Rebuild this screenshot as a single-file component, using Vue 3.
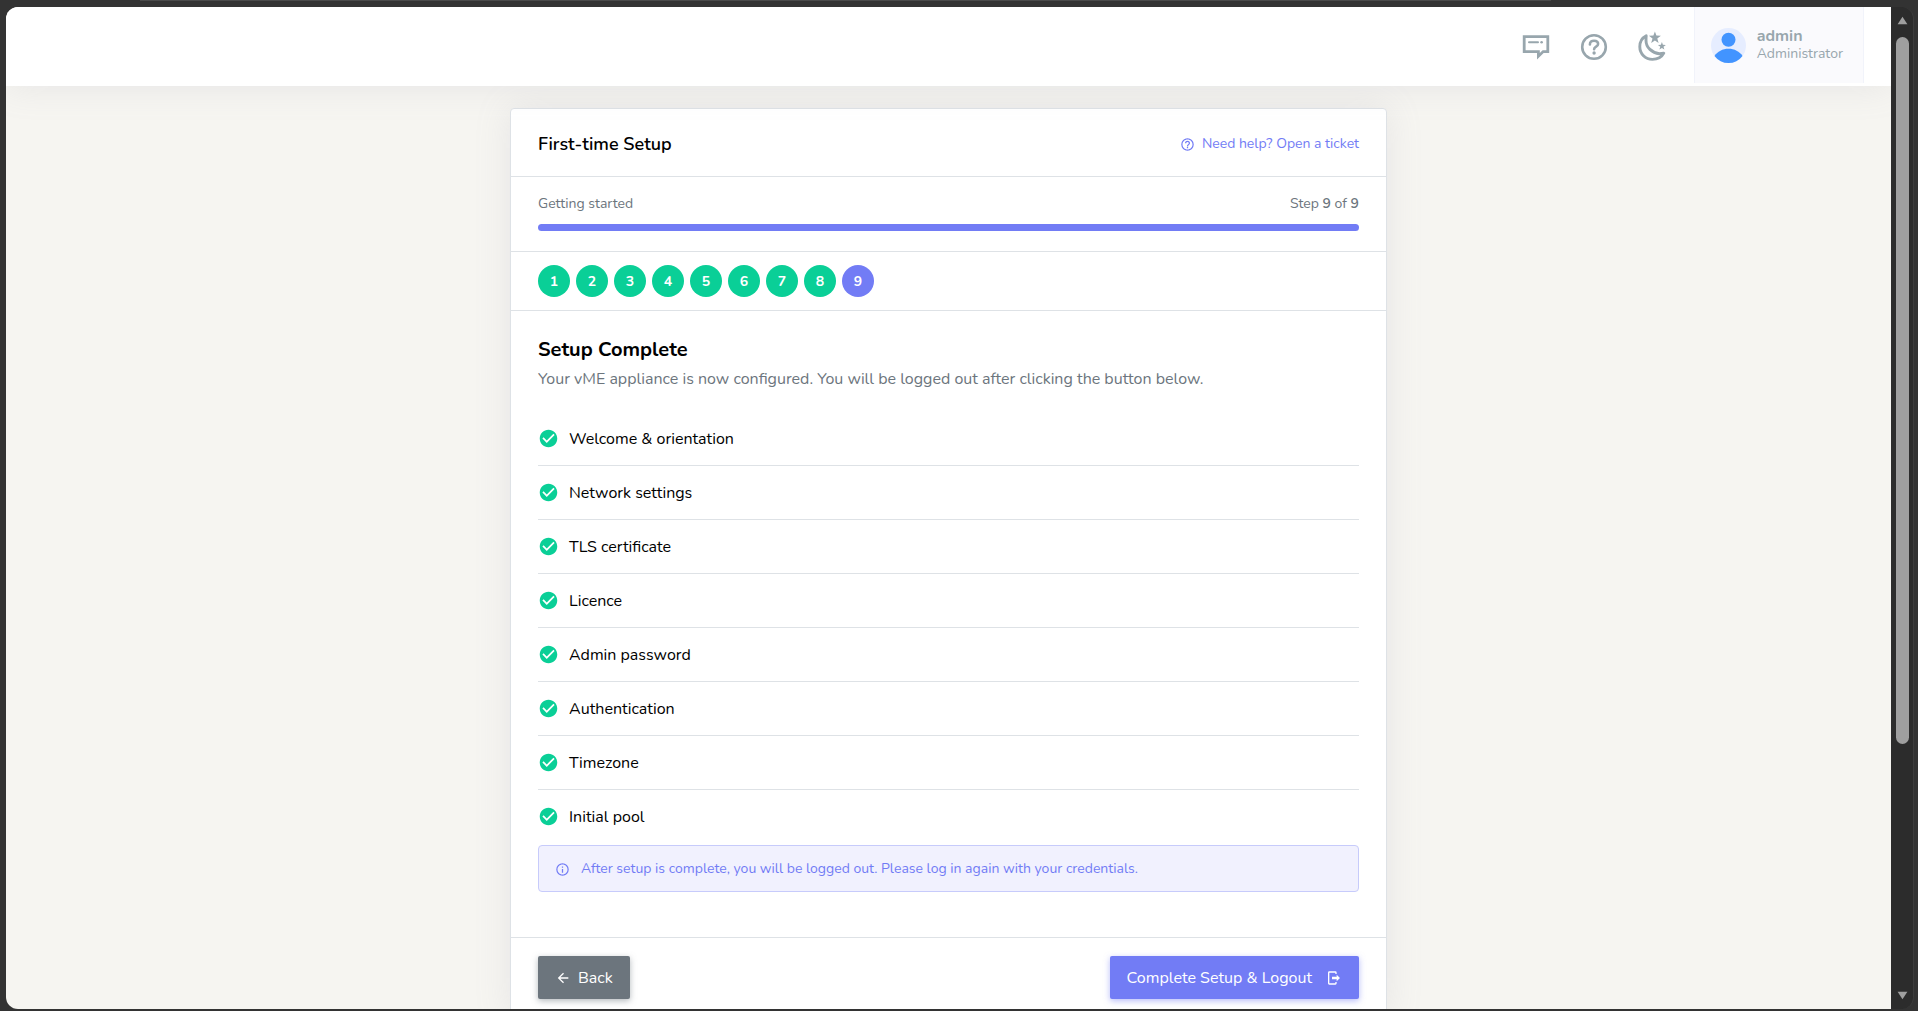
<template>
  <div class="window">
    <div class="tab-edge"></div>
    <div class="viewport">
      <div class="page">
        <header class="topbar">
          <button type="button" class="topbar-btn" aria-label="Feedback">
            <svg width="28" height="28" viewBox="0 0 28 28" fill="none" stroke="currentColor" stroke-width="2.8">
              <path d="M2.2 3.6H25.8V18.6H21.2L16.4 23.2V18.6H2.2Z" />
              <path d="M7 9.2H16" stroke-linecap="round" stroke-width="2" />
              <circle cx="19.6" cy="9.2" r="1.3" fill="currentColor" stroke="none" />
            </svg>
          </button>
          <button type="button" class="topbar-btn" aria-label="Help">
            <svg width="28" height="28" viewBox="0 0 28 28" fill="none" stroke="currentColor" stroke-width="2.6">
              <circle cx="14" cy="14" r="11.8" />
              <path d="M9.9 11.4C9.9 8.9 11.7 7.7 14 7.7S18.1 9 18.1 11C18.1 13.8 14.1 13.4 14.1 16.2" stroke-linecap="round" />
              <circle cx="14.1" cy="20" r="1.7" fill="currentColor" stroke="none" />
            </svg>
          </button>
          <button type="button" class="topbar-btn" aria-label="Dark mode">
            <svg width="28" height="32" viewBox="0 0 28 32" fill="currentColor">
              <path
                d="M8.2 4.8C3.9 7 1.8 11.2 1.8 15.8C1.8 22.8 7.4 28.4 14.4 28.4C19.4 28.4 23.7 26.2 25.8 22.2C24.3 22.6 22.8 22.7 21.4 22.7C14 22 8 16.4 8 9.4C8 7.8 8 6.3 8.2 4.8Z"
                fill="none" stroke="currentColor" stroke-width="2.9" stroke-linejoin="round"
              />
              <path d="M16.9 0.4L18.4 4.6L22.9 4.7L19.3 7.5L20.6 12L16.9 9.4L13.2 12L14.5 7.5L10.9 4.7L15.4 4.6Z" />
              <path d="M23.9 11L24.9 13.8L27.9 13.9L25.5 15.7L26.4 18.6L23.9 16.9L21.4 18.6L22.3 15.7L19.9 13.9L22.9 13.8Z" />
            </svg>
          </button>
          <button type="button" class="user">
            <svg class="avatar" width="35" height="35" viewBox="0 0 35 35">
              <circle cx="17.5" cy="17.5" r="17.5" fill="#e6edff" />
              <circle cx="17.5" cy="11.8" r="7" fill="#4294ff" />
              <path d="M3.5 28C6.5 23.4 11.6 20.8 17.5 20.8S28.5 23.4 31.5 28A17.5 17.5 0 0 1 3.5 28Z" fill="#4294ff" />
            </svg>
            <span class="user-text">
              <strong>admin</strong>
              <span>Administrator</span>
            </span>
          </button>
        </header>

        <main class="content">
          <section class="card">
            <div class="card-head">
              <h1>First-time Setup</h1>
              <a href="#" class="help-link">
                <svg class="icon-sm" viewBox="0 0 24 24"><path :d="icons.help" /></svg>
                Need help? Open a ticket
              </a>
            </div>

            <div class="progress-section">
              <div class="progress-labels">
                <span>Getting started</span>
                <span>Step <b>{{ current }}</b> of <b>{{ total }}</b></span>
              </div>
              <div class="progress">
                <div class="progress-bar" :style="{ width: (current / total) * 100 + '%' }"></div>
              </div>
            </div>

            <div class="steps">
              <button
                v-for="n in total"
                :key="n"
                type="button"
                class="step"
                :class="{ active: n === current }"
              >
                {{ n }}
              </button>
            </div>

            <div class="card-body">
              <h2>Setup Complete</h2>
              <p class="lead">
                Your vME appliance is now configured. You will be logged out after clicking the button below.
              </p>
              <ul class="checklist">
                <li v-for="item in items" :key="item">
                  <svg class="icon-check" viewBox="0 0 24 24"><path :d="icons.check" /></svg>
                  {{ item }}
                </li>
              </ul>
              <div class="alert">
                <svg class="icon-sm" viewBox="0 0 24 24"><path :d="icons.info" /></svg>
                After setup is complete, you will be logged out. Please log in again with your credentials.
              </div>
            </div>

            <div class="card-foot">
              <button type="button" class="btn btn-secondary">
                <svg class="icon-btn" viewBox="0 0 24 24"><path :d="icons.back" /></svg>
                Back
              </button>
              <button type="button" class="btn btn-primary">
                Complete Setup &amp; Logout
                <svg class="icon-btn" viewBox="0 0 24 24"><path :d="icons.logout" /></svg>
              </button>
            </div>
          </section>
        </main>
      </div>

      <div class="scrollbar">
        <svg width="11" height="9" viewBox="0 0 11 9"><path d="M5.5 0.8L10.4 8.2H0.6Z" /></svg>
        <div class="track"><div class="thumb"></div></div>
        <svg width="11" height="9" viewBox="0 0 11 9"><path d="M5.5 8.2L10.4 0.8H0.6Z" /></svg>
      </div>
    </div>
  </div>
</template>

<script setup>
import { ref } from "vue";

const total = 9;
const current = ref(9);

const items = [
  "Welcome & orientation",
  "Network settings",
  "TLS certificate",
  "Licence",
  "Admin password",
  "Authentication",
  "Timezone",
  "Initial pool",
];

const icons = {
  help: "M11,18H13V16H11V18M12,2A10,10 0 0,0 2,12A10,10 0 0,0 12,22A10,10 0 0,0 22,12A10,10 0 0,0 12,2M12,20C7.59,20 4,16.41 4,12C4,7.59 7.59,4 12,4C16.41,4 20,7.59 20,12C20,16.41 16.41,20 12,20M12,6A4,4 0 0,0 8,10H10A2,2 0 0,1 12,8A2,2 0 0,1 14,10C14,12 11,11.75 11,15H13C13,12.75 16,12.5 16,10A4,4 0 0,0 12,6Z",
  info: "M11,9H13V7H11M12,20C7.59,20 4,16.41 4,12C4,7.59 7.59,4 12,4C16.41,4 20,7.59 20,12C20,16.41 16.41,20 12,20M12,2A10,10 0 0,0 2,12A10,10 0 0,0 12,22A10,10 0 0,0 22,12A10,10 0 0,0 12,2M11,17H13V11H11V17Z",
  check: "M12 2C6.5 2 2 6.5 2 12S6.5 22 12 22 22 17.5 22 12 17.5 2 12 2M10 17L5 12L6.41 10.59L10 14.17L17.59 6.58L19 8L10 17Z",
  back: "M20,11V13H8L13.5,18.5L12.08,19.92L4.16,12L12.08,4.08L13.5,5.5L8,11H20Z",
  logout: "M16,17V14H9V10H16V7L21,12L16,17M14,2A2,2 0 0,1 16,4V6H14V4H5V20H14V18H16V20A2,2 0 0,1 14,22H5A2,2 0 0,1 3,20V4A2,2 0 0,1 5,2H14Z",
};
</script>

<style>
body {
  background: #333;
}
</style>

<style scoped>
.window {
  box-sizing: border-box;
  height: 100vh;
  padding: 0 4px 2px 6px;
  display: flex;
  flex-direction: column;
  background: #333;
  font-family: Nunito, "Open Sans", sans-serif;
  font-size: 16px;
  line-height: 24px;
  color: #000;
}
.tab-edge {
  height: 1px;
  margin: 0 19% 6px 7%;
  background: #4a4a4a;
}
.viewport {
  flex: 1;
  min-height: 0;
  display: flex;
  border-right: 1px solid #3d3d3d;
  border-radius: 12px;
  overflow: hidden;
  background: #2c2c2c;
}
.page {
  flex: 1;
  overflow: hidden;
  background: #f6f5f1;
}
.topbar {
  position: relative;
  z-index: 1;
  box-sizing: border-box;
  height: 79px;
  padding-right: 27px;
  display: flex;
  align-items: flex-start;
  justify-content: flex-end;
  background: #fff;
  box-shadow: 0 0 35px rgba(154, 154, 171, 0.17);
}
button {
  font-family: inherit;
  cursor: pointer;
}
.topbar-btn {
  width: 58px;
  height: 79px;
  padding: 0;
  border: 0;
  display: flex;
  align-items: center;
  justify-content: center;
  background: none;
  color: #98a6ad;
}
.user {
  height: 76px;
  margin-left: 13px;
  padding: 0 20px 0 16px;
  display: flex;
  align-items: center;
  gap: 11px;
  border: 1px solid #f1f3fa;
  border-width: 0 1px;
  background: #fafafd;
  color: #98a6ad;
  text-align: left;
}
.user-text {
  display: flex;
  flex-direction: column;
  font-size: 14px;
  line-height: 18px;
}
.user-text strong {
  font-size: 16px;
}
.content {
  padding: 22px 24px;
}
.card {
  box-sizing: border-box;
  max-width: 877px;
  margin: 0 auto;
  border: 1px solid #dee2e6;
  border-radius: 4px;
  background: #fff;
  box-shadow: 0 0 35px rgba(154, 154, 171, 0.17);
}
.card-head {
  padding: 23px 27px 20px;
  display: flex;
  align-items: center;
  justify-content: space-between;
  border-bottom: 1px solid #dee2e6;
}
h1,
h2 {
  margin: 0;
  font-weight: 700;
}
h1 {
  font-size: 18px;
  font-weight: 600;
}
h2 {
  font-size: 20px;
  line-height: 26px;
}
svg {
  flex: none;
}
.icon-sm,
.icon-btn,
.icon-check {
  width: 15px;
  height: 15px;
  fill: currentColor;
}
.help-link {
  display: flex;
  align-items: center;
  gap: 7px;
  font-size: 14px;
  color: #727cf5;
  text-decoration: none;
}
.progress-section {
  padding: 15px 27px 20px;
  border-bottom: 1px solid #dee2e6;
}
.progress-labels {
  display: flex;
  justify-content: space-between;
  font-size: 14px;
  color: #6c757d;
}
.progress-labels b {
  font-weight: 600;
}
.progress {
  height: 7px;
  margin-top: 8px;
  border-radius: 4px;
  overflow: hidden;
  background: #e3eaef;
}
.progress-bar {
  height: 100%;
  background: #727cf5;
}
.steps {
  padding: 13px 27px;
  display: flex;
  gap: 6px;
  border-bottom: 1px solid #dee2e6;
}
.step {
  width: 32px;
  height: 32px;
  padding: 0;
  border: 0;
  border-radius: 50%;
  background: #0acf97;
  color: #fff;
  font-size: 14px;
  font-weight: 700;
}
.step.active {
  background: #727cf5;
}
.card-body {
  padding: 26px 27px 45px;
}
.lead {
  margin: 4px 0 21px;
  color: #6c757d;
}
.checklist {
  margin: 0;
  padding: 0 0 1px;
  list-style: none;
}
.checklist li {
  box-sizing: border-box;
  height: 54px;
  display: flex;
  align-items: center;
  gap: 10px;
  border-bottom: 1px solid #dee2e6;
}
.checklist li:last-child {
  border-bottom-color: transparent;
}
.icon-check {
  width: 21px;
  height: 21px;
  color: #0acf97;
}
.alert {
  padding: 11px 16px 10px;
  display: flex;
  align-items: center;
  gap: 11px;
  border: 1px solid #c7cbfb;
  border-radius: 4px;
  background: #f1f1fe;
  color: #727cf5;
  font-size: 14px;
}
.card-foot {
  padding: 18px 27px;
  display: flex;
  justify-content: space-between;
  border-top: 1px solid #dee2e6;
}
.btn {
  height: 43px;
  padding: 0 17px;
  display: flex;
  align-items: center;
  gap: 7px;
  border: 0;
  border-radius: 2px;
  color: #fff;
  font-size: 16px;
}
.icon-btn {
  width: 16px;
  height: 16px;
}
.btn-secondary {
  background: #6c757d;
  box-shadow: 0 2px 6px rgba(108, 117, 125, 0.5);
}
.btn-primary {
  gap: 14px;
  background: #727cf5;
  box-shadow: 0 2px 6px rgba(114, 124, 245, 0.5);
}
.scrollbar {
  width: 22px;
  padding: 9px 0;
  box-sizing: border-box;
  display: flex;
  flex-direction: column;
  align-items: center;
  gap: 12px;
  fill: #9f9f9f;
}
.track {
  flex: 1;
  width: 13px;
}
.thumb {
  height: 75%;
  border-radius: 7px;
  background: #9f9f9f;
}
</style>
